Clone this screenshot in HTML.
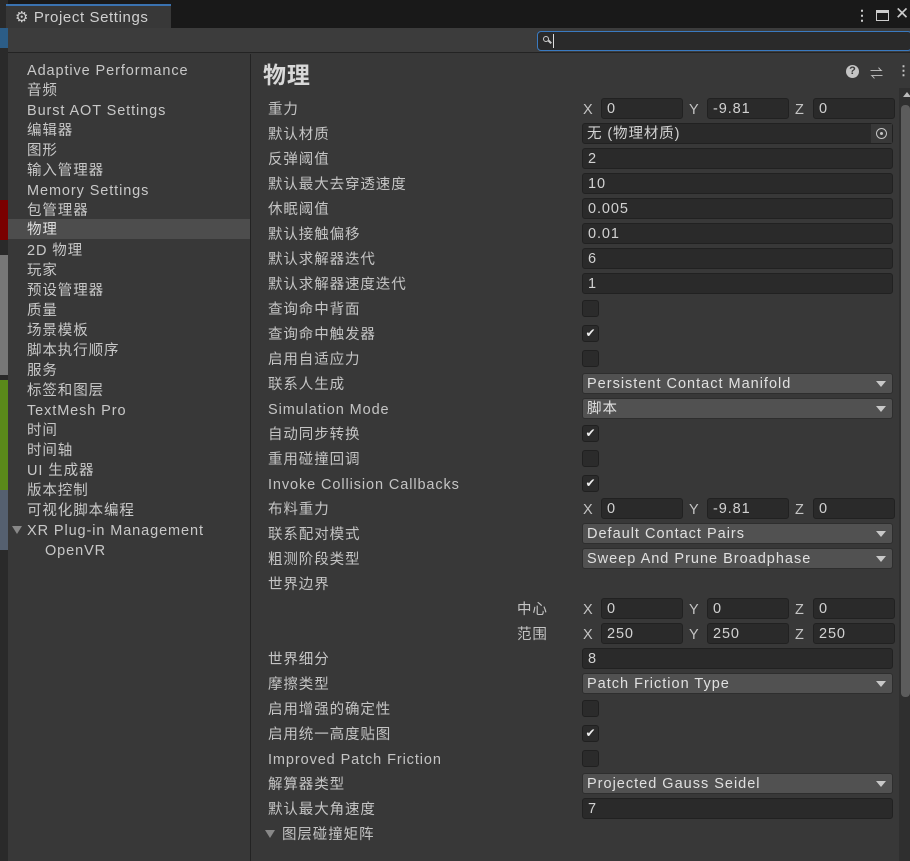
<!DOCTYPE html>
<html><head><meta charset="utf-8">
<style>
*{margin:0;padding:0;box-sizing:border-box}
body{width:910px;height:861px;background:#383838;overflow:hidden;position:relative;font-family:"Liberation Sans","Noto Sans CJK SC",sans-serif;font-size:14.5px;color:#c4c4c4;letter-spacing:0.9px}
.a{position:absolute;white-space:nowrap}
.l{position:absolute;left:27px;line-height:20px;color:#c8c8c8;padding-top:2px}
.lb{position:absolute;left:268px;line-height:20px;color:#c4c4c4;padding-top:2px}
.f{position:absolute;height:21px;background:#2a2a2a;border:1px solid #212121;border-radius:3px;padding-left:5px;line-height:21px;color:#d2d2d2}
.d{position:absolute;left:582px;width:311px;height:21px;background:#515151;border:1px solid #2e2e2e;border-radius:3px;padding-left:4px;line-height:21px;color:#e0e0e0;letter-spacing:1px}
.d:after{content:"";position:absolute;right:6px;top:7px;border-left:5px solid transparent;border-right:5px solid transparent;border-top:6px solid #c8c8c8}
.c{position:absolute;left:582px;width:17px;height:17px;background:#2b2b2b;border:1px solid #202020;border-radius:3px;letter-spacing:0}
.xl{position:absolute;line-height:20px;color:#c4c4c4;padding-top:2px}
</style></head><body>
<div class="a" style="left:0;top:0;width:8px;height:861px;background:#2a2a2a"></div>
<div class="a" style="left:0;top:28px;width:8px;height:20px;background:#2c5d87"></div>
<div class="a" style="left:0;top:200px;width:8px;height:40px;background:#7a0000"></div>
<div class="a" style="left:0;top:255px;width:8px;height:120px;background:#777"></div>
<div class="a" style="left:0;top:380px;width:8px;height:110px;background:#5a8a1a"></div>
<div class="a" style="left:0;top:490px;width:8px;height:60px;background:#556070"></div>
<div class="a" style="left:8px;top:0;width:902px;height:28px;background:#191919"></div>
<div class="a" style="left:6px;top:4px;width:165px;height:24px;background:#383838;border-top:2px solid #3a72b0"></div>
<div class="a" style="left:15px;top:8px;font-size:15px;color:#d0d0d0;letter-spacing:0.6px"><span style="font-size:15px">⚙</span> Project Settings</div>
<div class="a" style="left:855px;top:7px;color:#ccc;font-size:14px;font-weight:bold">⋮</div>
<div class="a" style="left:876px;top:10px;width:13px;height:11px;border:1.5px solid #ccc;border-top-width:3px"></div>
<div class="a" style="left:895px;top:4px;color:#ccc;font-size:17px">✕</div>
<div class="a" style="left:8px;top:28px;width:902px;height:25px;background:#3c3c3c;border-bottom:1px solid #232323"></div>
<div class="a" style="left:537px;top:31px;width:375px;height:20px;background:#2a2a2a;border:1px solid #3a7ac0;border-radius:4px"></div>
<div class="a" style="left:543px;top:36px;width:6px;height:6px;border:1.5px solid #ccc;border-radius:50%"></div>
<div class="a" style="left:548px;top:41px;width:4px;height:1.5px;background:#ccc;transform:rotate(45deg)"></div>
<div class="a" style="left:553px;top:34px;width:1px;height:14px;background:#ddd"></div>
<div class="a" style="left:250px;top:54px;width:1px;height:807px;background:#232323"></div>
<div class="a" style="left:8px;top:219px;width:242px;height:20px;background:#4d4d4d"></div>
<div class="l" style="top:59px">Adaptive Performance</div>
<div class="l" style="top:79px">音频</div>
<div class="l" style="top:99px">Burst AOT Settings</div>
<div class="l" style="top:119px">编辑器</div>
<div class="l" style="top:139px">图形</div>
<div class="l" style="top:159px">输入管理器</div>
<div class="l" style="top:179px">Memory Settings</div>
<div class="l" style="top:199px">包管理器</div>
<div class="l" style="top:218px;color:#e0e0e0">物理</div>
<div class="l" style="top:239px">2D 物理</div>
<div class="l" style="top:259px">玩家</div>
<div class="l" style="top:279px">预设管理器</div>
<div class="l" style="top:299px">质量</div>
<div class="l" style="top:319px">场景模板</div>
<div class="l" style="top:339px">脚本执行顺序</div>
<div class="l" style="top:359px">服务</div>
<div class="l" style="top:379px">标签和图层</div>
<div class="l" style="top:399px">TextMesh Pro</div>
<div class="l" style="top:419px">时间</div>
<div class="l" style="top:439px">时间轴</div>
<div class="l" style="top:459px">UI 生成器</div>
<div class="l" style="top:479px">版本控制</div>
<div class="l" style="top:499px">可视化脚本编程</div>
<div class="a" style="left:12px;top:526px;border-left:5px solid transparent;border-right:5px solid transparent;border-top:8px solid #888"></div>
<div class="l" style="top:519px">XR Plug-in Management</div>
<div class="l" style="top:539px;left:45px">OpenVR</div>
<div class="a" style="left:263px;top:56px;font-size:23px;font-weight:bold;color:#d8d8d8">物理</div>
<div class="a" style="left:846px;top:65px;width:13px;height:13px;border-radius:50%;background:#c4c4c4;color:#383838;font-size:11px;font-weight:bold;text-align:center;line-height:13px;letter-spacing:0">?</div>
<div class="a" style="left:870px;top:63px;color:#c4c4c4;font-size:13px">⇌</div>
<div class="a" style="left:897px;top:63px;color:#c4c4c4;font-size:13px;font-weight:bold">⋮</div>
<div class="a" style="left:899px;top:88px;width:11px;height:773px;background:#2f2f2f"></div>
<div class="a" style="left:901px;top:105px;width:9px;height:592px;background:#5c5c5c;border-radius:4px"></div>
<div class="a" style="left:903px;top:92px;border-left:4px solid transparent;border-right:4px solid transparent;border-bottom:5px solid #bbb"></div>

<div class="lb" style="top:98px">重力</div>
<div class="xl" style="left:583px;top:98px">X</div><div class="f" style="left:601px;top:98px;width:82px">0</div>
<div class="xl" style="left:689px;top:98px">Y</div><div class="f" style="left:707px;top:98px;width:82px">-9.81</div>
<div class="xl" style="left:795px;top:98px">Z</div><div class="f" style="left:813px;top:98px;width:82px">0</div>

<div class="lb" style="top:123px">默认材质</div>
<div class="f" style="left:582px;top:123px;width:311px;padding-left:4px">无 (物理材质)</div>
<div class="a" style="left:871px;top:124px;width:21px;height:19px;background:#383838"></div>
<div class="a" style="left:876px;top:128px;width:11px;height:11px;border:1.5px solid #c4c4c4;border-radius:50%"></div>
<div class="a" style="left:880px;top:132px;width:3px;height:3px;background:#c4c4c4;border-radius:50%"></div>

<div class="lb" style="top:148px">反弹阈值</div><div class="f" style="left:582px;top:148px;width:311px">2</div>
<div class="lb" style="top:173px">默认最大去穿透速度</div><div class="f" style="left:582px;top:173px;width:311px">10</div>
<div class="lb" style="top:198px">休眠阈值</div><div class="f" style="left:582px;top:198px;width:311px">0.005</div>
<div class="lb" style="top:223px">默认接触偏移</div><div class="f" style="left:582px;top:223px;width:311px">0.01</div>
<div class="lb" style="top:248px">默认求解器迭代</div><div class="f" style="left:582px;top:248px;width:311px">6</div>
<div class="lb" style="top:273px">默认求解器速度迭代</div><div class="f" style="left:582px;top:273px;width:311px">1</div>
<div class="lb" style="top:298px">查询命中背面</div><div class="c" style="top:300px"></div>
<div class="lb" style="top:323px">查询命中触发器</div><div class="c" style="top:325px;color:#eee;font-size:12px;line-height:15px;text-align:center">✔</div>
<div class="lb" style="top:348px">启用自适应力</div><div class="c" style="top:350px"></div>
<div class="lb" style="top:373px">联系人生成</div><div class="d" style="top:373px">Persistent Contact Manifold</div>
<div class="lb" style="top:398px">Simulation Mode</div><div class="d" style="top:398px">脚本</div>
<div class="lb" style="top:423px">自动同步转换</div><div class="c" style="top:425px;color:#eee;font-size:12px;line-height:15px;text-align:center">✔</div>
<div class="lb" style="top:448px">重用碰撞回调</div><div class="c" style="top:450px"></div>
<div class="lb" style="top:473px">Invoke Collision Callbacks</div><div class="c" style="top:475px;color:#eee;font-size:12px;line-height:15px;text-align:center">✔</div>
<div class="lb" style="top:498px">布料重力</div>
<div class="xl" style="left:583px;top:498px">X</div><div class="f" style="left:601px;top:498px;width:82px">0</div>
<div class="xl" style="left:689px;top:498px">Y</div><div class="f" style="left:707px;top:498px;width:82px">-9.81</div>
<div class="xl" style="left:795px;top:498px">Z</div><div class="f" style="left:813px;top:498px;width:82px">0</div>
<div class="lb" style="top:523px">联系配对模式</div><div class="d" style="top:523px">Default Contact Pairs</div>
<div class="lb" style="top:548px">粗测阶段类型</div><div class="d" style="top:548px">Sweep And Prune Broadphase</div>
<div class="lb" style="top:573px">世界边界</div>
<div class="xl" style="left:517px;top:598px">中心</div>
<div class="xl" style="left:583px;top:598px">X</div><div class="f" style="left:601px;top:598px;width:82px">0</div>
<div class="xl" style="left:689px;top:598px">Y</div><div class="f" style="left:707px;top:598px;width:82px">0</div>
<div class="xl" style="left:795px;top:598px">Z</div><div class="f" style="left:813px;top:598px;width:82px">0</div>
<div class="xl" style="left:517px;top:623px">范围</div>
<div class="xl" style="left:583px;top:623px">X</div><div class="f" style="left:601px;top:623px;width:82px">250</div>
<div class="xl" style="left:689px;top:623px">Y</div><div class="f" style="left:707px;top:623px;width:82px">250</div>
<div class="xl" style="left:795px;top:623px">Z</div><div class="f" style="left:813px;top:623px;width:82px">250</div>
<div class="lb" style="top:648px">世界细分</div><div class="f" style="left:582px;top:648px;width:311px">8</div>
<div class="lb" style="top:673px">摩擦类型</div><div class="d" style="top:673px">Patch Friction Type</div>
<div class="lb" style="top:698px">启用增强的确定性</div><div class="c" style="top:700px"></div>
<div class="lb" style="top:723px">启用统一高度贴图</div><div class="c" style="top:725px;color:#eee;font-size:12px;line-height:15px;text-align:center">✔</div>
<div class="lb" style="top:748px">Improved Patch Friction</div><div class="c" style="top:750px"></div>
<div class="lb" style="top:773px">解算器类型</div><div class="d" style="top:773px">Projected Gauss Seidel</div>
<div class="lb" style="top:798px">默认最大角速度</div><div class="f" style="left:582px;top:798px;width:311px">7</div>
<div class="a" style="left:265px;top:830px;border-left:5px solid transparent;border-right:5px solid transparent;border-top:8px solid #888"></div>
<div class="lb" style="top:823px;left:282px">图层碰撞矩阵</div>
</body></html>
